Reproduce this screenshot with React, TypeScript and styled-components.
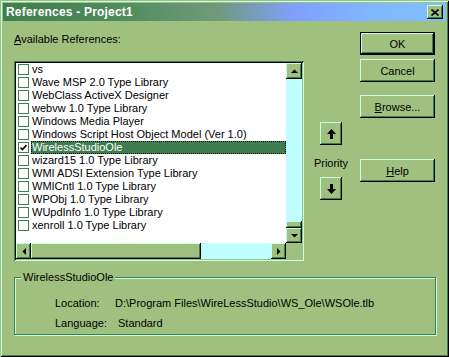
import styled, { createGlobalStyle } from "styled-components";

const FACE = "#a0c080";
const LIGHT = "#c8ffe8";
const SHADOW = "#408050";
const DARK = "#000000";
const TRACK = "#c0ffff";

const GlobalStyle = createGlobalStyle`
  html, body {
    margin: 0;
    padding: 0;
    background: ${FACE};
  }
  body {
    font-family: "Liberation Sans", Arial, sans-serif;
    font-size: 11px;
    color: #000;
  }
`;

const Window = styled.div`
  width: 449px;
  height: 357px;
  box-sizing: border-box;
  background: ${FACE};
  display: flex;
  flex-direction: column;
  box-shadow: inset 1px 1px 0 ${FACE}, inset -1px -1px 0 ${DARK},
    inset 2px 2px 0 ${LIGHT}, inset -2px -2px 0 ${SHADOW};
  padding: 3px;
`;

const TitleBar = styled.div`
  height: 18px;
  display: flex;
  align-items: center;
  justify-content: space-between;
  padding: 0 3px 0 3px;
  background: linear-gradient(
    to right,
    #3f7d4e 0%,
    #4f8a5e 25%,
    #6f9a7a 48%,
    #80a0ff 66%,
    #80b8ff 85%,
    #80c0ff 100%
  );
`;

const Title = styled.span`
  color: #fff;
  font-weight: bold;
  font-size: 12px;
  letter-spacing: 0.2px;
`;

const CloseButton = styled.div`
  width: 16px;
  height: 14px;
  box-sizing: border-box;
  background: ${FACE};
  display: flex;
  align-items: center;
  justify-content: center;
  box-shadow: inset -1px -1px 0 ${DARK}, inset 1px 1px 0 ${LIGHT},
    inset -2px -2px 0 ${SHADOW};
`;

const Body = styled.div`
  display: flex;
  padding: 11px 0 0 11px;
`;

const LeftColumn = styled.div`
  display: flex;
  flex-direction: column;
  width: 290px;
`;

const Label = styled.div`
  height: 13px;
  line-height: 13px;
  margin-top: 1px;
  margin-bottom: 15px;
`;

const Accel = styled.span`
  text-decoration: underline;
`;

const ListBox = styled.div`
  width: 290px;
  height: 200px;
  box-sizing: border-box;
  padding: 2px;
  display: grid;
  grid-template-columns: 1fr 16px;
  grid-template-rows: 1fr 16px;
  background: ${FACE};
  box-shadow: inset 1px 1px 0 ${SHADOW}, inset -1px -1px 0 ${LIGHT},
    inset 2px 2px 0 ${DARK}, inset -2px -2px 0 ${FACE};
`;

const Items = styled.div`
  background: #fff;
  overflow: hidden;
  display: flex;
  flex-direction: column;
`;

const Row = styled.div`
  height: 13px;
  display: flex;
  align-items: center;
  padding-left: 2px;
  white-space: nowrap;
`;

const Box = styled.div`
  width: 11px;
  height: 11px;
  box-sizing: border-box;
  border: 1px solid ${SHADOW};
  background: #fff;
  margin-right: 2px;
  flex: none;
  display: flex;
  align-items: center;
  justify-content: center;
`;

const ItemText = styled.span<{ $selected?: boolean }>`
  flex: 1;
  height: 13px;
  line-height: 13px;
  padding-left: 1px;
  box-sizing: border-box;
  color: ${(p) => (p.$selected ? "#fff" : "#000")};
  background: ${(p) => (p.$selected ? "#3f7d4e" : "transparent")};
  outline: ${(p) => (p.$selected ? "1px dotted #000" : "none")};
  outline-offset: -1px;
`;

const VScroll = styled.div`
  background: ${TRACK};
  display: flex;
  flex-direction: column;
`;

const HScroll = styled.div`
  background: ${TRACK};
  display: flex;
`;

const Track = styled.div`
  flex: 1;
`;

const Raised = styled.div<{ $w?: number; $h?: number }>`
  width: ${(p) => (p.$w ? `${p.$w}px` : "auto")};
  height: ${(p) => (p.$h ? `${p.$h}px` : "auto")};
  flex: none;
  box-sizing: border-box;
  background: ${FACE};
  display: flex;
  align-items: center;
  justify-content: center;
  box-shadow: inset -1px -1px 0 ${DARK}, inset 1px 1px 0 ${LIGHT},
    inset -2px -2px 0 ${SHADOW};
`;

const Corner = styled.div`
  background: ${FACE};
`;

const PriorityColumn = styled.div`
  width: 22px;
  margin-left: 16px;
  padding-top: 90px;
  display: flex;
  flex-direction: column;
  align-items: center;
`;

const PriorityLabel = styled.div`
  height: 32px;
  display: flex;
  align-items: center;
  padding-top: 3px;
  box-sizing: border-box;
  white-space: nowrap;
`;

const ButtonColumn = styled.div`
  margin-left: 18px;
  display: flex;
  flex-direction: column;
`;

const Button = styled.div<{ $default?: boolean; $gap?: number }>`
  width: 75px;
  height: 23px;
  box-sizing: border-box;
  margin-top: ${(p) => p.$gap ?? 0}px;
  background: ${FACE};
  display: flex;
  align-items: center;
  justify-content: center;
  box-shadow: ${(p) =>
    p.$default
      ? `inset 0 0 0 1px ${DARK}, inset -2px -2px 0 ${DARK}, inset 2px 2px 0 ${LIGHT}, inset -3px -3px 0 ${SHADOW}`
      : `inset -1px -1px 0 ${DARK}, inset 1px 1px 0 ${LIGHT}, inset -2px -2px 0 ${SHADOW}`};
`;

const Group = styled.fieldset`
  margin: 10px 10px 0 11px;
  padding: 0 0 10px 6px;
  height: 64px;
  box-sizing: border-box;
  border: 1px solid ${SHADOW};
  box-shadow: 1px 1px 0 ${LIGHT}, inset 1px 1px 0 ${LIGHT};
`;

const Legend = styled.legend`
  padding: 0 2px;
  line-height: 13px;
  background: ${FACE};
`;

const InfoRow = styled.div<{ $top: number }>`
  display: flex;
  height: 13px;
  line-height: 13px;
  margin: ${(p) => p.$top}px 0 0 34px;
  white-space: nowrap;
`;

const InfoLabel = styled.span`
  width: 60px;
`;

const InfoValue = styled.span<{ $shift?: number }>`
  padding-left: ${(p) => p.$shift ?? 0}px;
`;

const items = [
  "vs",
  "Wave MSP 2.0 Type Library",
  "WebClass ActiveX Designer",
  "webvw 1.0 Type Library",
  "Windows Media Player",
  "Windows Script Host Object Model (Ver 1.0)",
  "WirelessStudioOle",
  "wizard15 1.0 Type Library",
  "WMI ADSI Extension Type Library",
  "WMICntl 1.0 Type Library",
  "WPObj 1.0 Type Library",
  "WUpdInfo 1.0 Type Library",
  "xenroll 1.0 Type Library",
];

const Tri = ({ dir }: { dir: "up" | "down" | "left" | "right" }) => {
  const pts = {
    up: "0,4 7,4 3.5,0.5",
    down: "0,0 7,0 3.5,3.5",
    left: "4,0 4,7 0.5,3.5",
    right: "0,0 0,7 3.5,3.5",
  }[dir];
  const vert = dir === "up" || dir === "down";
  return (
    <svg width={vert ? 7 : 4} height={vert ? 4 : 7} viewBox={vert ? "0 0 7 4" : "0 0 4 7"}>
      <polygon points={pts} fill="#000" />
    </svg>
  );
};

const BigArrow = ({ down }: { down?: boolean }) => (
  <svg width="9" height="10" viewBox="0 0 9 10" style={{ transform: down ? "rotate(180deg)" : undefined }}>
    <polygon points="4.5,0 9,5 6,5 6,10 3,10 3,5 0,5" fill="#000" />
  </svg>
);

export default function App() {
  return (
    <>
      <GlobalStyle />
      <Window>
        <TitleBar>
          <Title>References - Project1</Title>
          <CloseButton>
            <svg width="8" height="7" viewBox="0 0 8 7">
              <path d="M0.5 0.5 L7.5 6.5 M7.5 0.5 L0.5 6.5" stroke="#000" strokeWidth="1.6" />
            </svg>
          </CloseButton>
        </TitleBar>

        <Body>
          <LeftColumn>
            <Label>
              <Accel>A</Accel>vailable References:
            </Label>
            <ListBox>
              <Items>
                {items.map((name) => {
                  const selected = name === "WirelessStudioOle";
                  return (
                    <Row key={name}>
                      <Box>
                        {selected && (
                          <svg width="7" height="7" viewBox="0 0 7 7">
                            <path d="M0.5 3.5 L2.5 5.5 L6.5 1" stroke="#000" strokeWidth="1.6" fill="none" />
                          </svg>
                        )}
                      </Box>
                      <ItemText $selected={selected}>{name}</ItemText>
                    </Row>
                  );
                })}
              </Items>
              <VScroll>
                <Raised $h={16}>
                  <Tri dir="up" />
                </Raised>
                <Track />
                <Raised $h={7} />
                <Raised $h={15}>
                  <Tri dir="down" />
                </Raised>
              </VScroll>
              <HScroll>
                <Raised $w={15}>
                  <Tri dir="left" />
                </Raised>
                <Raised $w={170} />
                <Track />
                <Raised $w={15}>
                  <Tri dir="right" />
                </Raised>
              </HScroll>
              <Corner />
            </ListBox>
          </LeftColumn>

          <PriorityColumn>
            <Raised $w={22} $h={23}>
              <BigArrow />
            </Raised>
            <PriorityLabel>Priority</PriorityLabel>
            <Raised $w={22} $h={23}>
              <BigArrow down />
            </Raised>
          </PriorityColumn>

          <ButtonColumn>
            <Button $default>OK</Button>
            <Button $gap={4}>Cancel</Button>
            <Button $gap={13}>
              <span>
                <Accel>B</Accel>rowse...
              </span>
            </Button>
            <Button $gap={41}>
              <span>
                <Accel>H</Accel>elp
              </span>
            </Button>
          </ButtonColumn>
        </Body>

        <Group>
          <Legend>WirelessStudioOle</Legend>
          <InfoRow $top={13}>
            <InfoLabel>Location:</InfoLabel>
            <InfoValue>D:\Program Files\WireLessStudio\WS_Ole\WSOle.tlb</InfoValue>
          </InfoRow>
          <InfoRow $top={7}>
            <InfoLabel>Language:</InfoLabel>
            <InfoValue $shift={3}>Standard</InfoValue>
          </InfoRow>
        </Group>
      </Window>
    </>
  );
}
